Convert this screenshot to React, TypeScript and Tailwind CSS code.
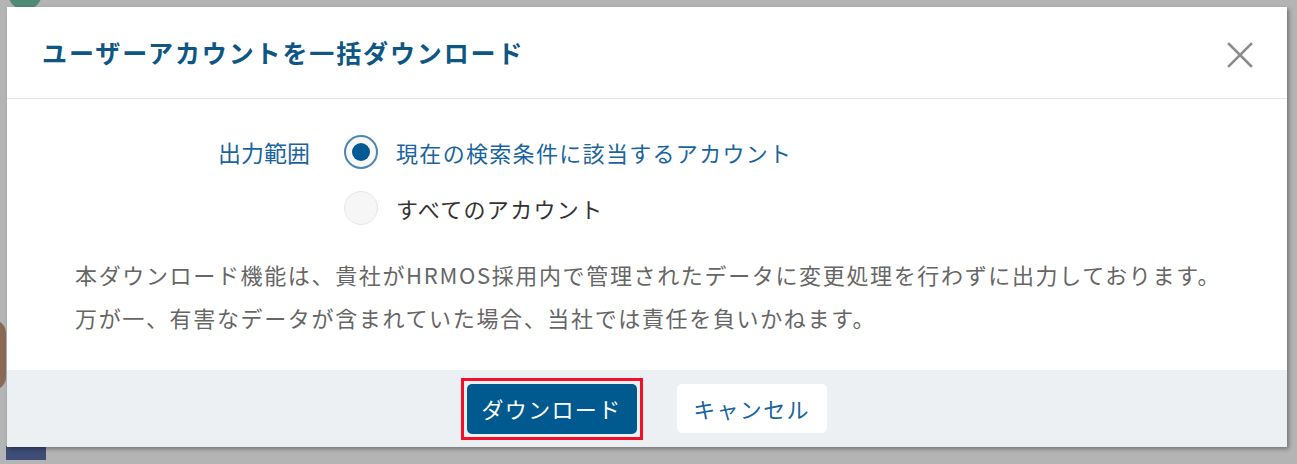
import React from "react";

const font = { fontFamily: '"Noto Sans CJK JP", "Noto Sans", sans-serif' };

export default function App() {
  return (
    <div
      className="relative w-[1297px] h-[464px] overflow-hidden bg-[#b4b4b4]"
      style={font}
    >
      <div className="absolute left-[8px] top-[-24px] w-[34px] h-[34px] rounded-full bg-[#4e8a76]" />
      <div className="absolute left-[-20px] top-[320px] w-[26px] h-[70px] rounded-full bg-[#8a6a55]" />
      <div className="absolute left-[6px] bottom-[4px] w-[40px] h-[14px] bg-[#3d4d77]" />
      <div className="relative pt-[7px] pl-[7px]">
        <div className="w-[1280px] bg-white shadow-[2px_2px_4px_rgba(0,0,0,0.35)] flex flex-col">
          <div className="h-[92px] flex items-center justify-between pl-[35px] pr-[34px] border-b border-[#e6e6e6]">
            <h1 className="text-[25px] font-bold text-[#0e5784] tracking-[0.075em]">
              ユーザーアカウントを一括ダウンロード
            </h1>
            <svg width="26" height="26" viewBox="0 0 26 26" className="mt-[4px]">
              <path d="M2 2 L24 24 M24 2 L2 24" stroke="#8c8c8c" strokeWidth="2.6" strokeLinecap="square" />
            </svg>
          </div>
          <div className="h-[271px] flex flex-col pt-[36px]">
            <div className="flex">
              <div className="w-[337px] text-right pr-[34px] text-[23px] text-[#1a64a0] leading-[34px]">
                出力範囲
              </div>
              <div className="flex flex-col gap-[22px]">
                <label className="flex items-center gap-[18px]">
                  <span className="w-[34px] h-[34px] rounded-full border-2 border-[#4a87b4] bg-[#f7f7f7] flex items-center justify-center">
                    <span className="w-[18px] h-[18px] rounded-full bg-[#005a93]" />
                  </span>
                  <span className="text-[22px] text-[#1a64a0] leading-[34px] tracking-[0.06em]">
                    現在の検索条件に該当するアカウント
                  </span>
                </label>
                <label className="flex items-center gap-[18px]">
                  <span className="w-[34px] h-[34px] rounded-full border border-[#e8e8e8] bg-[#f6f6f6]" />
                  <span className="text-[22px] text-[#333333] leading-[34px] tracking-[0.06em]">
                    すべてのアカウント
                  </span>
                </label>
              </div>
            </div>
            <div className="mt-[28px] pl-[68px] text-[22px] text-[#666666] leading-[43px] tracking-[0.075em]">
              <p>本ダウンロード機能は、貴社がHRMOS採用内で管理されたデータに変更処理を行わずに出力しております。</p>
              <p>万が一、有害なデータが含まれていた場合、当社では責任を負いかねます。</p>
            </div>
          </div>
          <div className="h-[77px] bg-[#edf0f3] flex items-center justify-center gap-[34px] pr-[7px]">
            <div className="border-[3px] border-[#f0102a] p-[3px]">
              <button className="w-[170px] h-[50px] rounded-[5px] bg-[#005a8f] text-white text-[22px] tracking-[0.06em]">
                ダウンロード
              </button>
            </div>
            <button className="w-[150px] h-[49px] rounded-[5px] bg-white text-[#1a64a0] text-[22px] tracking-[0.06em]">
              キャンセル
            </button>
          </div>
        </div>
      </div>
    </div>
  );
}
